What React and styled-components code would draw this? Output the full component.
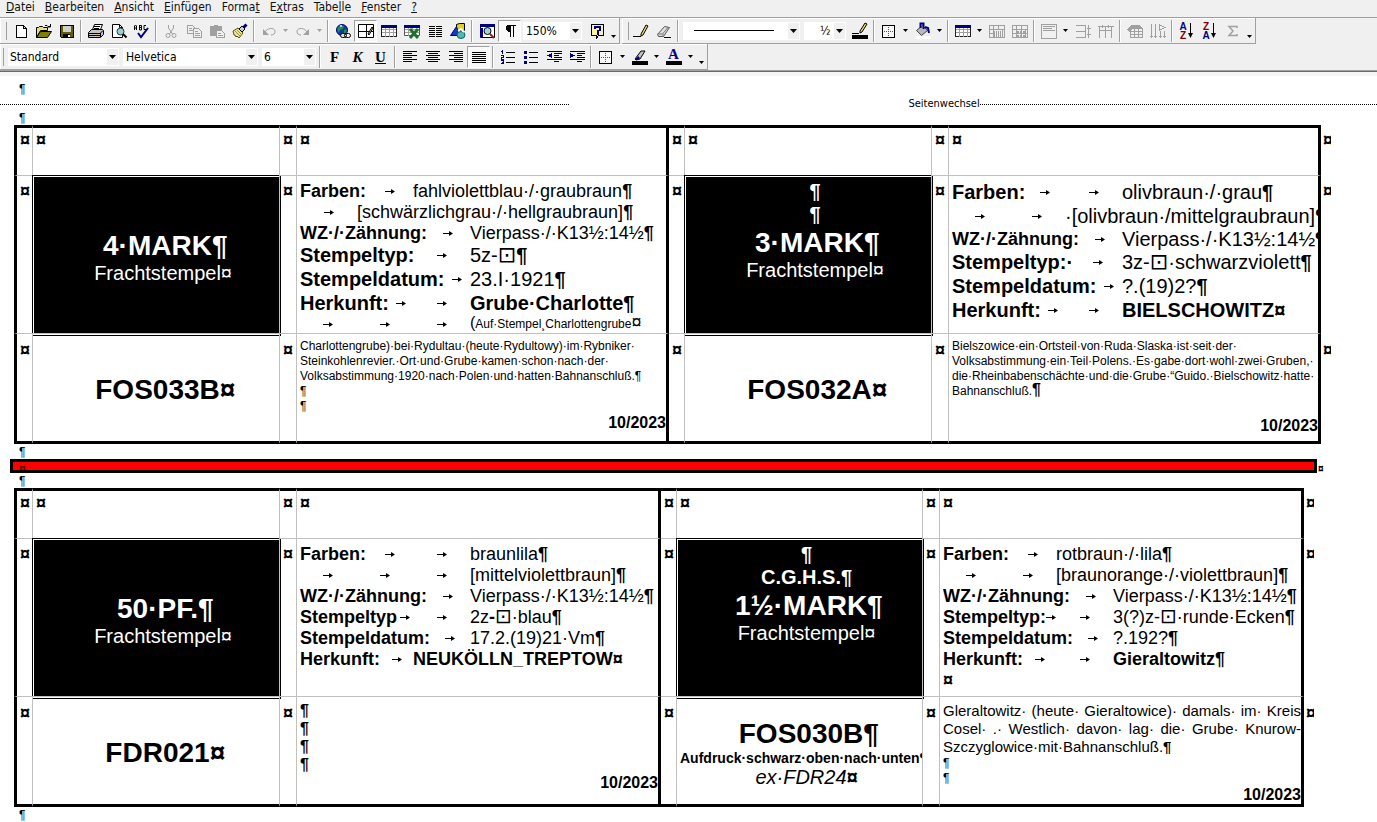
import React from "react";
import styled, { createGlobalStyle, css } from "styled-components";

const GlobalStyle = createGlobalStyle`
  *, *::before, *::after { box-sizing: border-box; }
  body {
    margin: 0;
    background: #fff;
    color: #000;
    font-family: "Liberation Sans", Arial, sans-serif;
    overflow-x: hidden;
  }
`;

const uiFont = '"DejaVu Sans Condensed", "Noto Sans", sans-serif';

/* ---------- window chrome ---------- */

const Chrome = styled.header`
  background: #f0f0f0;
  font: 12px/17px ${uiFont};
`;

const MenuBar = styled.nav`
  display: flex;
  gap: 10px;
  height: 17px;
  padding: 0 6px;
  align-items: flex-start;
`;

const MenuItem = styled.button`
  border: 0;
  padding: 0;
  background: none;
  font: 12px/14px ${uiFont};
  color: #111;
  white-space: nowrap;
`;

const ToolRow = styled.div`
  display: flex;
  height: ${(p) => (p.$last ? 26 : 27)}px;
  gap: 2px;
  border-top: ${(p) => (p.$last ? 0 : "1px solid #a0a0a0")};
`;

const Toolbar = styled.div`
  display: flex;
  align-items: center;
  padding: 0 0 0 ${(p) => p.$lead || 9}px;
  border-right: 1px solid #a0a0a0;
  border-bottom: 1px solid #a0a0a0;
  box-shadow: inset 1px 1px 0 #fff;
  background: linear-gradient(#a0a0a0, #a0a0a0) ${(p) => (p.$lead === 8 ? 3 : 6)}px 4px / 1px 18px no-repeat;
`;

const Tool = styled.button`
  width: 23px;
  height: 22px;
  flex: none;
  display: flex;
  align-items: center;
  justify-content: center;
  border: 1px solid transparent;
  padding: 0;
  background: none;
  color: ${(p) => (p.$off ? "#a0a0a0" : "#000")};
  ${(p) =>
    p.$pressed &&
    css`
      border-color: #a0a0a0 #fff #fff #a0a0a0;
      background: #f8f8f8;
    `}
`;

const DropButton = styled(Tool)`
  width: 11px;
  align-items: ${(p) => (p.$low ? "flex-end" : "center")};
  padding-bottom: ${(p) => (p.$low ? 3 : 0)}px;
`;

const Separator = styled.span`
  width: 6px;
  height: 22px;
  flex: none;
  background: linear-gradient(90deg, transparent 2px, #a0a0a0 2px, #a0a0a0 3px, #fff 3px, #fff 4px, transparent 4px);
`;

const Combo = styled.label`
  position: relative;
  display: block;
  flex: none;
  width: ${(p) => p.$w}px;
  height: 18px;
  margin-left: ${(p) => p.$before || 0}px;
  margin-right: ${(p) => p.$after ?? 4}px;
  background: #fff;
`;

const ComboSelect = styled.select`
  appearance: none;
  width: 100%;
  height: 18px;
  border: 0;
  padding: 0 12px 0 ${(p) => p.$indent || 2}px;
  background: #fff;
  color: #000;
  font: 12px/16px ${uiFont};
`;

const ComboArrow = styled.span`
  position: absolute;
  right: 1px;
  top: 1px;
  width: 11px;
  height: 16px;
  display: flex;
  align-items: center;
  justify-content: center;
  background: #f0f0f0;
  pointer-events: none;
`;

const LineSample = styled.span`
  position: absolute;
  left: 11px;
  top: 8px;
  width: 80px;
  height: 1px;
  background: #000;
  pointer-events: none;
`;

const ChromeEdge = styled.div`
  height: 6px;
  border-top: 1px solid #a0a0a0;
  background: linear-gradient(#696969 1px, #f5f5f5 1px);
`;

function Triangle({ size = 5 }) {
  const h = (size + 1) / 2;
  return (
    <svg width={size} height={h} viewBox={`0 0 ${size} ${h}`} aria-hidden="true">
      <path d={`M0 0H${size}L${size / 2} ${h}Z`} fill="#000" />
    </svg>
  );
}

function Picker({ label, value, width, before, after, indent, children }) {
  return (
    <Combo $w={width} $before={before} $after={after}>
      <ComboSelect aria-label={label} $indent={indent} defaultValue={value}>
        <option value={value}>{value}</option>
      </ComboSelect>
      {children}
      <ComboArrow>
        <Triangle size={7} />
      </ComboArrow>
    </Combo>
  );
}

const Glyph = styled.svg.attrs({ width: 18, height: 18, viewBox: "0 0 18 18", fill: "none", "aria-hidden": true })`
  display: block;
  flex: none;
  shape-rendering: ${(p) => (p.$smooth ? "auto" : "crispEdges")};
`;

const NAVY = "#000080";

const icons = {
  new: <path d="M4.5 3.5h7l3 3v9h-10zM11.5 3.5v3h3" fill="#fff" stroke="#000" />,
  open: (
    <>
      <path d="M1.5 15.5v-10h2l1-1h3l1 1h4v3h-7z" fill="#e8e070" stroke="#000" />
      <path d="M1.5 15.5l4-6h11l-4 6z" fill="#808000" stroke="#000" />
      <path d="M10 3.500h2l1 1h2M15.500 2v3h-3" stroke="#000" />
    </>
  ),
  save: (
    <>
      <path d="M2.500 3.500h13v12h-12l-1-1z" fill="#606000" stroke="#000" />
      <path d="M5 4h8v6H5z" fill="#d0d0c8" />
      <path d="M5 12h7v4H5z" fill="#000" />
      <path d="M10 13h2v2h-2z" fill="#fff" />
    </>
  ),
  print: (
    <>
      <path d="M5.500 7.500l2-5h8l-2 5z" fill="#fff" stroke="#000" />
      <path d="M7 4.500h6M7 6.500h5" stroke="#000" />
      <path d="M1.500 10.500l3-3h11l1 1v4l-3 3h-12z" fill="#c0c0c0" stroke="#000" />
      <path d="M2 11.500h11l3-3M2 13.500h11M13.500 11v4" stroke="#000" />
      <path d="M8 12h3v1H8z" fill="#e0d000" />
    </>
  ),
  preview: (
    <>
      <path d="M2.500 2.500h7l3 3v10h-10z" fill="#fff" stroke="#000" />
      <path d="M9.500 2.500v3h3" stroke="#000" />
      <circle cx="10.500" cy="9.500" r="3.500" fill="#9cd0d0" stroke="#333" />
      <path d="M13 12l3.500 3.500" stroke="#000" strokeWidth="2" />
    </>
  ),
  spell: (
    <>
      <path d="M1.500 8V4l1-1 1 1v4M2 6h2M6.500 3v5h2v-2.500h-2h2V3.500h-2M13 3.500h-2v4h2" stroke="#000" />
      <path d="M5 11l3 4 7-9" stroke={NAVY} strokeWidth="2" />
    </>
  ),
  cut: (
    <>
      <path d="M6.500 3v3l4 6M11.500 3v3l-4 6" stroke="currentColor" />
      <circle cx="6" cy="13.500" r="2" stroke="currentColor" />
      <circle cx="12" cy="13.500" r="2" stroke="currentColor" />
    </>
  ),
  copy: (
    <>
      <path d="M2.500 3.500h5l2 2v6h-7zM4 6.500h3M4 8.500h4" stroke="currentColor" />
      <path d="M8.500 6.500h5l3 3v6h-8z" fill="#f0f0f0" stroke="currentColor" />
      <path d="M10 9.500h3M10 11.500h5M10 13.500h5" stroke="currentColor" />
    </>
  ),
  paste: (
    <>
      <path d="M2 4h4V2.500h4V4h4v4H8v6H2z" fill="currentColor" />
      <path d="M8.500 8.500h5l3 3v4h-8z" fill="#f0f0f0" stroke="currentColor" />
      <path d="M10 11.500h3M10 13.500h5" stroke="currentColor" />
    </>
  ),
  brush: (
    <>
      <path d="M2 9l5-3 5 5-4 5-2-2-1 1-1-2-1 0z" fill="#f0e888" stroke="#555500" />
      <path d="M4 9l5 5M6 8l5 5" stroke="#888" />
      <path d="M8 7l3-3 3 3-3 3z" fill="#ccc" stroke="#000" />
      <path d="M12.500 5.500l3-3" stroke={NAVY} strokeWidth="3" />
    </>
  ),
  undo: (
    <>
      <path d="M5 10c2-4 9-5 10-1 .5 3-2 4-4 4" stroke="currentColor" />
      <path d="M3 7v6h6z" fill="currentColor" />
    </>
  ),
  redo: (
    <>
      <path d="M13 10c-2-4-9-5-10-1-.5 3 2 4 4 4" stroke="currentColor" />
      <path d="M15 7v6H9z" fill="currentColor" />
    </>
  ),
  globe: (
    <>
      <circle cx="8" cy="8" r="5.500" fill="#1038a0" stroke={NAVY} />
      <path d="M4 5l3-2 3 1-1 3-3 1-1 3-2-3zM10 8l3-1-1 4-2 0z" fill="#209040" />
      <path d="M6 3h2v2H6z" fill="#9fd8ff" />
      <rect x="6.500" y="11.500" width="6" height="4" rx="2" fill="#ddd" stroke="#000" />
      <rect x="10.500" y="11.500" width="6" height="4" rx="2" stroke="#000" />
    </>
  ),
  borders: (
    <>
      <path d="M1.500 2.500h15v13h-15zM9.500 2.500v13M1.500 9.500h15" fill="#fff" stroke="#000" />
      <path d="M11 12l4-7 1 1-4 7z" fill="#f0e040" stroke="#000" />
    </>
  ),
  table: (
    <>
      <path d="M1.500 3.500h15v11h-15z" fill="#fff" stroke="#222" />
      <path d="M2 7.500h14M2 10.500h14M5.500 6v9M9.500 6v9M13.500 6v9" stroke="#a0a0a0" />
      <path d="M1 3h16v3H1z" fill={NAVY} />
    </>
  ),
  excel: (
    <>
      <path d="M1.500 3.500h15v10h-15z" fill="#fff" stroke="#555" />
      <path d="M2 7.500h14M2 10.500h14M5.500 6v8M9.500 6v8" stroke="#a0a0a0" />
      <path d="M1 3h16v3H1z" fill={NAVY} />
      <path d="M7 7l8 9M15 7l-8 9" stroke="#207030" strokeWidth="3" />
    </>
  ),
  columns: <path d="M3 4.500h6M3 6.500h6M3 8.500h6M3 10.500h6M3 12.500h6M3 14.500h6M10 4.500h6M10 6.500h6M10 8.500h6M10 10.500h6M10 12.500h6M10 14.500h6" stroke="#000" />,
  draw: (
    <>
      <path d="M7.500 2.500l3-1h5v7h-8z" fill="#e0d020" stroke="#000" />
      <path d="M1.500 13.500l6-9 3 9z" fill="#1838c0" stroke={NAVY} />
      <ellipse cx="12" cy="13" rx="4" ry="3.500" fill="#50b8b0" stroke="#066" />
      <path d="M9 9l3-2 3 3" stroke="#fff" strokeWidth="2" />
    </>
  ),
  map: (
    <>
      <path d="M2.500 2.500h14v13h-14z" fill="#fff" stroke="#000" />
      <path d="M2 2h15v3H2zM2 6h3v9H2z" fill={NAVY} />
      <circle cx="9.500" cy="9" r="3.500" fill="#9cd8d8" stroke="#000" />
      <path d="M12 12l4 4" stroke="#902020" strokeWidth="2" />
    </>
  ),
  pilcrow: (
    <>
      <path d="M6 3h9v1H6zM6 3h4v7H7L5 8V4z" fill="#000" />
      <path d="M9.500 3v12M12.500 3v12" stroke="#000" />
    </>
  ),
  help: (
    <>
      <path d="M3.500 2.500h12v11h-5l-2 3v-3h-5z" fill="#f8f4a0" stroke="#000" />
      <path d="M7 6.500V5h5v3l-2.500 1v1.500M9.500 11v2" stroke={NAVY} strokeWidth="2" />
    </>
  ),
  pencil: (
    <>
      <path d="M1 14.500h8" stroke="#000" />
      <path d="M9 12l5-9 2 1-5 9-2 1z" fill="#e8d860" stroke="#000" />
    </>
  ),
  eraser: (
    <>
      <path d="M2.500 12.500l7-8 5 1-6 9h-5z" fill="#ddd" stroke="#555" />
      <path d="M2.500 12l5 0 6-7M8 12v3" stroke="#777" />
      <path d="M9 15.500h7" stroke="#000" />
    </>
  ),
  pencolor: (
    <>
      <path d="M1 11.500h7" stroke="#000" />
      <path d="M9 9l5-8 2 1-5 8-2 1z" fill="#e8d860" stroke="#000" />
      <path d="M1 13h16v4H1z" fill="#000" />
    </>
  ),
  grid: (
    <>
      <path d="M2.500 3.500h12v12h-12z" fill="#f8f8f8" stroke="#000" />
      <path d="M8.500 5v9M4 9.500h9" stroke="#555" strokeDasharray="1 1" />
    </>
  ),
  bucket: (
    <>
      <path d="M2.500 8.500l6-5 5 5-6 5z" fill="#b8b8b8" stroke="#444" />
      <path d="M6.500 6V1.500h3V7M11 5l3 1 1 5" stroke={NAVY} strokeWidth="2" />
      <path d="M1 14h16v3H1z" fill="#fff" />
    </>
  ),
  merge: (
    <>
      <path d="M1.500 3.500h15v12h-15zM1.500 7.500h15M5.500 3v12M10.500 3v4M14.500 7v8M1.500 11.500h4" stroke="currentColor" />
      <path d="M6 9.500h8M6 11.500h8M6 13.500h8" stroke="currentColor" strokeDasharray="1 1" strokeWidth="2" />
    </>
  ),
  split: (
    <>
      <path d="M1.500 3.500h15v12h-15zM1.500 7.500h15M5.500 3v12M10.500 3v12M14.500 7v8M1.500 11.500h15" stroke="currentColor" />
      <path d="M6 9.500h8M6 13.500h8" stroke="currentColor" strokeDasharray="2 1" strokeWidth="2" />
    </>
  ),
  alignBox: <path d="M1.500 2.500h15v14h-15zM3 4.500h12M3 6.500h9M3 8.500h12" stroke="currentColor" />,
  rows: <path d="M2 3.500h10M2 9.500h10M2 15.500h10M11.500 3v13M14.500 3v13M13 6h4M13 12h4" stroke="currentColor" />,
  cols: <path d="M2.500 5v11M8.500 5v11M14.500 5v11M2 8.500h13M1 4.500h16M5 3v3M11 3v3" stroke="currentColor" />,
  autoformat: (
    <>
      <path d="M4.500 6.500h12v9h-12zM4.500 9.500h12M4.500 12.500h12M8.500 6v9M12.500 6v9" stroke="currentColor" />
      <path d="M1 7l4-4h9l2 3H7l-4 4z" fill="currentColor" />
    </>
  ),
  textdir: (
    <path d="M2.500 2v14M6.500 2v14M11.500 9v7M15.500 9v7M10 2.500l6 3-6 3zM1 14.500h3M5 14.500h3M10 14.500h3M14 14.500h3" stroke="currentColor" />
  ),
  sigma: <path d="M13 6V4.500H5l4 4.500-4 4.500h8V12" stroke="currentColor" strokeWidth="1.500" />,
  left: <path d="M2 3.500h14M2 5.500h9M2 7.500h14M2 9.500h9M2 11.500h14M2 13.500h9" stroke="#000" />,
  center: <path d="M2 3.500h14M4 5.500h10M2 7.500h14M4 9.500h10M2 11.500h14M4 13.500h10" stroke="#000" />,
  right: <path d="M2 3.500h14M7 5.500h9M2 7.500h14M7 9.500h9M2 11.500h14M7 13.500h9" stroke="#000" />,
  justify: <path d="M2 4.500h14M2 6.500h14M2 8.500h14M2 10.500h14M2 12.500h14M2 14.500h14" stroke="#000" />,
  numbers: (
    <>
      <path d="M7 4.500h9M7 9.500h9M7 14.500h9" stroke="#000" />
      <path d="M3.500 2v4M2 3.500h2M2 7.500h2v2H2.500v1.500H5M2 12.500h2.500v3H2M3 14h1" stroke={NAVY} />
    </>
  ),
  bullets: (
    <>
      <path d="M7 4.500h9M7 9.500h9M7 14.500h9" stroke="#000" />
      <path d="M2 3h3v3H2zM2 8h3v3H2zM2 13h3v3H2z" fill={NAVY} />
    </>
  ),
  outdent: (
    <>
      <path d="M2 3.500h15M9 5.500h8M9 7.500h5M9 9.500h8M2 11.500h15M9 13.500h5" stroke="#000" />
      <path d="M7 5v5L2 7.500z" fill={NAVY} />
    </>
  ),
  indent: (
    <>
      <path d="M2 3.500h15M9 5.500h8M9 7.500h5M9 9.500h8M2 11.500h15M9 13.500h5" stroke="#000" />
      <path d="M2 5v5l5-2.500z" fill={NAVY} />
    </>
  ),
  highlight: (
    <>
      <path d="M4 11l6-8h4l-5 8-4 1z" fill="#c0c0c0" stroke="#000" />
      <path d="M4 12l3-4 2 2-2 2z" fill={NAVY} />
      <path d="M1 13h16v4H1z" fill="#000" />
    </>
  ),
};

const smoothIcons = new Set(["open", "print", "preview", "spell", "cut", "brush", "undo", "redo", "globe", "draw", "map", "pencil", "eraser", "pencolor", "bucket", "highlight", "sigma", "excel", "borders"]);

function IconTool({ icon, label, off, pressed }) {
  return (
    <Tool type="button" aria-label={label} $off={off} $pressed={pressed}>
      <Glyph $smooth={smoothIcons.has(icon)}>{icons[icon]}</Glyph>
    </Tool>
  );
}

function Drop({ label, low, off }) {
  return (
    <DropButton type="button" aria-label={label} $low={low}>
      <svg width="5" height="3" viewBox="0 0 5 3" aria-hidden="true">
        <path d="M0 0H5L2.500 3Z" fill={off ? "#a0a0a0" : "#000"} />
      </svg>
    </DropButton>
  );
}

const Letter = styled.span`
  font: bold 15px/18px "Liberation Serif", serif;
  font-style: ${(p) => (p.$italic ? "italic" : "normal")};
  text-decoration: ${(p) => (p.$under ? "underline" : "none")};
`;

const FontColor = styled.span`
  width: 16px;
  border-bottom: 4px solid #000;
  color: ${NAVY};
  font: bold 15px/13px "Liberation Serif", serif;
  text-align: center;
`;

const SortIcon = styled.span`
  display: flex;
  align-items: center;
`;

const SortLetters = styled.span`
  display: flex;
  flex-direction: column;
  font: bold 10px/9px "Liberation Sans", sans-serif;
`;

const Tint = styled.span`
  color: ${(p) => p.$c};
`;

function Sort({ label, top, bottom, flip }) {
  return (
    <Tool type="button" aria-label={label}>
      <SortIcon>
        <SortLetters>
          <Tint $c={flip ? "#800000" : NAVY}>{top}</Tint>
          <Tint $c={flip ? NAVY : "#800000"}>{bottom}</Tint>
        </SortLetters>
        <svg width="7" height="16" viewBox="0 0 7 16" aria-hidden="true">
          <path d="M3.500 0v12" stroke="#000" />
          <path d="M1 10h5l-2.500 5z" fill="#000" />
        </svg>
      </SortIcon>
    </Tool>
  );
}

const menus = [
  ["", "D", "atei"],
  ["", "B", "earbeiten"],
  ["", "A", "nsicht"],
  ["", "E", "infügen"],
  ["Forma", "t", ""],
  ["E", "x", "tras"],
  ["Tabe", "l", "le"],
  ["", "F", "enster"],
  ["", "?", ""],
];

function WindowChrome() {
  return (
    <Chrome>
      <MenuBar>
        {menus.map(([a, key, b]) => (
          <MenuItem type="button" key={a + key + b}>
            {a}
            <u>{key}</u>
            {b}
          </MenuItem>
        ))}
      </MenuBar>
      <ToolRow>
        <Toolbar role="toolbar" aria-label="Standard">
          <IconTool icon="new" label="Neu" />
          <IconTool icon="open" label="Öffnen" />
          <IconTool icon="save" label="Speichern" />
          <Separator />
          <IconTool icon="print" label="Drucken" />
          <IconTool icon="preview" label="Seitenansicht" />
          <IconTool icon="spell" label="Rechtschreibung" />
          <Separator />
          <IconTool icon="cut" label="Ausschneiden" off />
          <IconTool icon="copy" label="Kopieren" off />
          <IconTool icon="paste" label="Einfügen" off />
          <IconTool icon="brush" label="Format übertragen" />
          <Separator />
          <IconTool icon="undo" label="Rückgängig" off />
          <Drop label="Rückgängig-Liste" off />
          <IconTool icon="redo" label="Wiederherstellen" off />
          <Drop label="Wiederherstellen-Liste" off />
          <Separator />
          <IconTool icon="globe" label="Hyperlink" />
          <IconTool icon="borders" label="Tabellen und Rahmen" pressed />
          <IconTool icon="table" label="Tabelle einfügen" />
          <IconTool icon="excel" label="Excel-Tabelle einfügen" />
          <IconTool icon="columns" label="Spalten" />
          <IconTool icon="draw" label="Zeichnen" />
          <Separator />
          <IconTool icon="map" label="Dokumentstruktur" />
          <IconTool icon="pilcrow" label="Formatierungszeichen" pressed />
          <Picker label="Zoom" value="150%" width={59} before={2} after={3} indent={3} />
          <IconTool icon="help" label="Hilfe" />
          <Drop label="Weitere Schaltflächen" low />
        </Toolbar>
        <Toolbar role="toolbar" aria-label="Tabellen und Rahmen" $lead={7}>
          <IconTool icon="pencil" label="Tabelle zeichnen" />
          <IconTool icon="eraser" label="Radierer" />
          <Separator />
          <Picker label="Linienart" value="" width={117} before={2} after={4}>
            <LineSample />
          </Picker>
          <Picker label="Linienstärke" value="½" width={42} indent={16} after={2} />
          <IconTool icon="pencolor" label="Rahmenfarbe" />
          <Separator />
          <IconTool icon="grid" label="Rahmenlinien" />
          <Drop label="Rahmenlinien wählen" />
          <IconTool icon="bucket" label="Schattierung" />
          <Drop label="Schattierungsfarbe" />
          <Separator />
          <IconTool icon="table" label="Tabelle" />
          <Drop label="Tabellenbefehle" />
          <IconTool icon="merge" label="Zellen verbinden" off />
          <IconTool icon="split" label="Zellen teilen" off />
          <Separator />
          <IconTool icon="alignBox" label="Ausrichtung" off />
          <Drop label="Ausrichtung wählen" />
          <IconTool icon="rows" label="Zeilen gleichmäßig verteilen" off />
          <IconTool icon="cols" label="Spalten gleichmäßig verteilen" off />
          <Separator />
          <IconTool icon="autoformat" label="AutoFormat" off />
          <IconTool icon="textdir" label="Textrichtung" off />
          <Separator />
          <Sort label="Aufsteigend sortieren" top="A" bottom="Z" />
          <Sort label="Absteigend sortieren" top="Z" bottom="A" flip />
          <IconTool icon="sigma" label="AutoSumme" off />
          <Drop label="Weitere Tabellenbefehle" low />
        </Toolbar>
      </ToolRow>
      <ToolRow $last>
        <Toolbar role="toolbar" aria-label="Format" $lead={8}>
          <Picker label="Formatvorlage" value="Standard" width={111} />
          <Picker label="Schriftart" value="Helvetica" width={135} indent={3} />
          <Picker label="Schriftgrad" value="6" width={54} after={1} />
          <Separator />
          <Tool type="button" aria-label="Fett"><Letter>F</Letter></Tool>
          <Tool type="button" aria-label="Kursiv"><Letter $italic>K</Letter></Tool>
          <Tool type="button" aria-label="Unterstrichen"><Letter $under>U</Letter></Tool>
          <Separator />
          <IconTool icon="left" label="Linksbündig" />
          <IconTool icon="center" label="Zentriert" />
          <IconTool icon="right" label="Rechtsbündig" />
          <IconTool icon="justify" label="Blocksatz" pressed />
          <Separator />
          <IconTool icon="numbers" label="Nummerierung" />
          <IconTool icon="bullets" label="Aufzählungszeichen" />
          <IconTool icon="outdent" label="Einzug verkleinern" />
          <IconTool icon="indent" label="Einzug vergrößern" />
          <Separator />
          <IconTool icon="grid" label="Rahmen" />
          <Drop label="Rahmen wählen" />
          <IconTool icon="highlight" label="Hervorheben" />
          <Drop label="Hervorhebungsfarbe" />
          <Tool type="button" aria-label="Schriftfarbe"><FontColor>A</FontColor></Tool>
          <Drop label="Schriftfarbe wählen" />
          <Drop label="Weitere Formatbefehle" low />
        </Toolbar>
      </ToolRow>
      <ChromeEdge />
    </Chrome>
  );
}

/* ---------- document ---------- */

const Page = styled.main`
  padding-top: 5px;
`;

const Para = styled.p`
  margin: 0;
  height: 15px;
  padding: 1px 0 0 19px;
  font-size: 12px;
  line-height: 15px;
`;

const PageBreak = styled.div`
  display: flex;
  align-items: center;
  height: 14px;
  padding-top: 2px;
  font: 11px/12px ${uiFont};
`;

const Dots = styled.span`
  flex: ${(p) => p.$grow} 1 0;
  height: 1px;
  margin-top: 1px;
  background: repeating-linear-gradient(90deg, #000 0 1px, transparent 1px 2px);
`;

const BreakGap = styled.span`
  flex: 340 1 0;
`;

const BarRow = styled.div`
  display: flex;
  align-items: flex-end;
  margin: 0 52px 0 10px;
  height: 14px;
`;

const RedBar = styled.div`
  flex: 1;
  height: 14px;
  border: 3px solid #000;
  background: #f00;
  color: #600000;
  overflow: hidden;
  padding-left: 6px;
  font: bold 12px/15px "Liberation Sans", Arial, sans-serif;
`;

const BarEnd = styled.span`
  width: 8px;
  height: 8px;
  padding-left: 1px;
  overflow: hidden;
  font: bold 10px/8px "Liberation Sans", Arial, sans-serif;
`;

const Sheet = styled.table`
  width: calc(100% - ${(p) => p.$margin}px);
  margin-left: 14px;
  table-layout: fixed;
  border-collapse: separate;
  border-spacing: 0;
`;

const Col = styled.col`
  width: ${(p) => (p.$w ? `${p.$w}px` : "auto")};
`;

const Row = styled.tr`
  height: ${(p) => p.$h}px;
`;

const Cell = styled.td`
  position: relative;
  padding: ${(p) => p.$top}px 0 0 3px;
  vertical-align: ${(p) => (p.$middle ? "middle" : "top")};
  text-align: ${(p) => (p.$center ? "center" : "left")};
  white-space: nowrap;
  border: 0 solid #c0c0c0;
  border-left-width: 1px;
  border-top-width: 1px;
  ${(p) => p.$edge === "start" && "border-left: 3px solid #000;"}
  ${(p) => p.$edge === "none" && "border-left: 0;"}
  ${(p) => p.$edge === "end" && "border-right: 3px solid #000;"}
  ${(p) => p.$row === "first" && "border-top: 3px solid #000;"}
  ${(p) => p.$row === "last" && "border-bottom: 3px solid #000;"}
`;

const OutsideCell = styled.td`
  padding: ${(p) => p.$top}px 0 0 2px;
  vertical-align: top;
`;

const StampCell = styled(Cell)`
  color: #fff;
  &::before {
    content: "";
    position: absolute;
    inset: -1px -2px -3px -1px;
    border: 1px solid #000;
    background: #000;
    box-shadow: inset 0 0 0 1px #fff;
  }
`;

const StampText = styled.div`
  position: relative;
`;

const Mark = styled.span`
  display: block;
  width: ${(p) => (p.$cut ? "8px" : "auto")};
  overflow: hidden;
  font-size: 18px;
  font-weight: bold;
  line-height: 21px;
`;

const Line = styled.div`
  display: flex;
  font-size: ${(p) => p.$size || 18}px;
  font-weight: ${(p) => (p.$bold ? "bold" : "normal")};
  font-style: ${(p) => (p.$italic ? "italic" : "normal")};
  line-height: ${(p) => p.$lh || 21}px;
  justify-content: ${(p) => p.$align || "flex-start"};
`;

const Justified = styled.div`
  font-size: 15px;
  line-height: 18px;
  white-space: normal;
  text-align: justify;
  text-align-last: justify;
`;

const Clip = styled.div`
  overflow: hidden;
`;

const Hang = styled.span`
  width: 0;
  overflow: visible;
  font-weight: ${(p) => (p.$bold ? "bold" : "inherit")};
`;

const leadWidth = { 1: 57, 2: 113, 3: 170 };

const Lead = styled.span`
  display: grid;
  flex: none;
  width: ${(p) => leadWidth[p.$stops]}px;
  grid-template-columns: repeat(${(p) => p.$stops}, 1fr);
`;

const Stop = styled.span`
  grid-column: span ${(p) => p.$span};
  display: flex;
  min-width: 0;
  align-items: center;
`;

const Label = styled.b`
  flex: none;
  font-size: ${(p) => (p.$size ? `${p.$size}px` : "inherit")};
`;

const TabArrow = styled.span`
  flex: 1;
  display: flex;
  justify-content: center;
`;

const Sym = styled.span`
  font-size: ${(p) => p.$size}px;
  font-weight: ${(p) => (p.$bold ? "bold" : "normal")};
  line-height: 0;
  font-family: ${(p) => (p.$math ? '"DejaVu Sans", sans-serif' : "inherit")};
`;

function Tab() {
  return (
    <TabArrow>
      <svg width="10" height="5" viewBox="0 0 10 5" aria-hidden="true">
        <path d="M0 2.500h8" stroke="#000" />
        <path d="M6 0l4 2.500-4 2.500z" fill="#000" />
      </svg>
    </TabArrow>
  );
}

/* spans lists how many tab stops each tab covers; the first one also holds the label */
function Field({ label, labelSize, spans, size, lh, bold, end = "¶", children }) {
  const total = spans.reduce((a, b) => a + b, 0);
  return (
    <Line $size={size} $lh={lh}>
      <Lead $stops={total}>
        {spans.map((s, i) => (
          <Stop $span={s} key={i}>
            {i === 0 && label ? <Label $size={labelSize}>{label}</Label> : null}
            <Tab />
          </Stop>
        ))}
      </Lead>
      <span>
        {bold ? <b>{children}</b> : children}
        <b>{end}</b>
      </span>
    </Line>
  );
}

function Box({ size }) {
  return <Sym $math $size={size}>⊡</Sym>;
}

function Note({ children }) {
  return <Line $size={12} $lh={15}>{children}</Line>;
}

function Stamp({ value, extra }) {
  return (
    <StampText>
      {extra}
      <Line $size={28} $lh={33} $bold $align="center">{value}<Hang>¶</Hang></Line>
      <Line $size={20} $lh={23} $align="center">Frachtstempel<Hang>¤</Hang></Line>
    </StampText>
  );
}

const Blank20 = () => (
  <Line $size={20} $lh={23} $bold $align="center"><Hang>¶</Hang></Line>
);

function Code({ children, end = "¤" }) {
  return <Line $size={28} $lh={33} $bold $align="center">{children}<Hang>{end}</Hang></Line>;
}

function DateLine() {
  return <Line $size={16} $lh={18} $bold $align="flex-end">10/2023</Line>;
}

function LabelSheet({ margin, stampWidth, left, right }) {
  const halves = [left, right];
  return (
    <Sheet $margin={margin}>
      <colgroup>
        <Col $w={18} /><Col $w={247} /><Col $w={17} /><Col />
        <Col $w={15} /><Col $w={stampWidth} /><Col $w={17} /><Col />
        <Col $w={14} />
      </colgroup>
      <tbody>
        <Row $h={50}>
          {halves.map((_, i) => (
            <React.Fragment key={i}>
              <Cell $row="first" $edge={i ? "none" : "start"} $top={2}><Mark>¤</Mark></Cell>
              <Cell $row="first" $top={2}><Mark>¤</Mark></Cell>
              <Cell $row="first" $top={2}><Mark>¤</Mark></Cell>
              <Cell $row="first" $edge="end" $top={2}><Mark>¤</Mark></Cell>
            </React.Fragment>
          ))}
          <OutsideCell $top={5}><Mark $cut>¤</Mark></OutsideCell>
        </Row>
        <Row $h={158}>
          {halves.map((h, i) => (
            <React.Fragment key={i}>
              <Cell $edge={i ? "none" : "start"} $top={5}><Mark>¤</Mark></Cell>
              <StampCell $center $top={4} $middle={h.middle}>{h.stamp}</StampCell>
              <Cell $top={5}><Mark>¤</Mark></Cell>
              <Cell $edge="end" $top={h.fieldTop || 5}><Clip>{h.fields}</Clip></Cell>
            </React.Fragment>
          ))}
          <OutsideCell $top={6}><Mark $cut>¤</Mark></OutsideCell>
        </Row>
        <Row $h={111}>
          {halves.map((h, i) => (
            <React.Fragment key={i}>
              <Cell $row="last" $edge={i ? "none" : "start"} $top={6}><Mark>¤</Mark></Cell>
              <Cell $row="last" $center $middle $top={4}><Clip>{h.code}</Clip></Cell>
              <Cell $row="last" $top={6}><Mark>¤</Mark></Cell>
              <Cell $row="last" $edge="end" $top={5}>{h.notes}</Cell>
            </React.Fragment>
          ))}
          <OutsideCell $top={7}><Mark $cut>¤</Mark></OutsideCell>
        </Row>
      </tbody>
    </Sheet>
  );
}

const mark4 = {
  middle: true,
  stamp: <Stamp value="4·MARK" />,
  fields: (
    <>
      <Field label="Farben:" spans={[2]}>fahlviolettblau·/·graubraun</Field>
      <Field spans={[1]}>[schwärzlichgrau·/·hellgraubraun]</Field>
      <Field label="WZ·/·Zähnung:" spans={[3]}>Vierpass·/·K13½:14½</Field>
      <Field label="Stempeltyp:" spans={[3]} size={20} lh={23}>5z-<Box size={22} /></Field>
      <Field label="Stempeldatum:" spans={[3]} size={20} lh={24}>23.I·1921</Field>
      <Field label="Herkunft:" spans={[2, 1]} size={20} lh={24} bold>Grube·Charlotte</Field>
      <Field spans={[1, 1, 1]} size={12} lh={18} end={<Sym $size={18}>¤</Sym>}>
        <Sym $size={16}>(</Sym>Auf·Stempel¸Charlottengrube
      </Field>
    </>
  ),
  code: <Code>FOS033B</Code>,
  notes: (
    <>
      <Note>Charlottengrube)·bei·Rydultau·(heute·Rydultowy)·im·Rybniker·</Note>
      <Note>Steinkohlenrevier.·Ort·und·Grube·kamen·schon·nach·der·</Note>
      <Note>Volksabstimmung·1920·nach·Polen·und·hatten·Bahnanschluß.¶</Note>
      <Note>¶</Note>
      <Note>¶</Note>
      <DateLine />
    </>
  ),
};

const mark3 = {
  stamp: <Stamp value="3·MARK" extra={<><Blank20 /><Blank20 /></>} />,
  fieldTop: 4,
  fields: (
    <>
      <Field label="Farben:" spans={[2, 1]} size={20} lh={24}>olivbraun·/·grau</Field>
      <Field spans={[1, 1]} size={20} lh={24}>·[olivbraun·/mittelgraubraun]</Field>
      <Field label="WZ·/·Zähnung:" labelSize={18} spans={[3]} size={20} lh={22}>Vierpass·/·K13½:14½</Field>
      <Field label="Stempeltyp:·" spans={[3]} size={20} lh={24}>3z-<Box size={22} />·schwarzviolett</Field>
      <Field label="Stempeldatum:" spans={[3]} size={20} lh={24}>?.(19)2?</Field>
      <Field label="Herkunft:" spans={[2, 1]} size={20} lh={24} bold end="¤">BIELSCHOWITZ</Field>
    </>
  ),
  code: <Code>FOS032A</Code>,
  notes: (
    <>
      <Note>Bielszowice·ein·Ortsteil·von·Ruda·Slaska·ist·seit·der·</Note>
      <Note>Volksabstimmung·ein·Teil·Polens.·Es·gabe·dort·wohl·zwei·Gruben,·</Note>
      <Note>die·Rheinbabenschächte·und·die·Grube·“Guido.·Bielschowitz·hatte·</Note>
      <Note><span>Bahnanschluß.<Sym $size={16} $bold>¶</Sym></span></Note>
      <Line $size={16} $lh={18}>&nbsp;</Line>
      <DateLine />
    </>
  ),
};

const pf50 = {
  middle: true,
  stamp: <Stamp value="50·PF." />,
  fields: (
    <>
      <Field label="Farben:" spans={[2, 1]}>braunlila</Field>
      <Field spans={[1, 1, 1]}>[mittelviolettbraun]</Field>
      <Field label="WZ·/·Zähnung:" spans={[3]}>Vierpass·/·K13½:14½</Field>
      <Field label="Stempeltyp" spans={[2, 1]}>2z<b>-</b><Box size={20} />·blau</Field>
      <Field label="Stempeldatum:" spans={[3]}>17.2.(19)21·Vm</Field>
      <Field label="Herkunft:" spans={[2]} bold end="¤">NEUKÖLLN_TREPTOW</Field>
    </>
  ),
  code: <Code>FDR021</Code>,
  notes: (
    <>
      {[0, 1, 2, 3].map((n) => (
        <Line key={n} $size={16} $lh={18} $bold>¶</Line>
      ))}
      <DateLine />
    </>
  ),
};

const mark15 = {
  stamp: (
    <Stamp
      value="1½·MARK"
      extra={
        <>
          <Blank20 />
          <Line $size={20} $lh={23} $bold $align="center">C.G.H.S.<Hang>¶</Hang></Line>
        </>
      }
    />
  ),
  fields: (
    <>
      <Field label="Farben:" spans={[2]}>rotbraun·/·lila</Field>
      <Field spans={[1, 1]}>[braunorange·/·violettbraun]</Field>
      <Field label="WZ·/·Zähnung:" spans={[3]}>Vierpass·/·K13½:14½</Field>
      <Field label="Stempeltyp:" spans={[2, 1]}>3(?)z-<Box size={20} />·runde·Ecken</Field>
      <Field label="Stempeldatum:" spans={[3]}>?.192?</Field>
      <Field label="Herkunft:" spans={[2, 1]} bold>Gieraltowitz</Field>
      <Mark>¤</Mark>
    </>
  ),
  code: (
    <>
      <Code end="¶">FOS030B</Code>
      <Line $size={14} $lh={16} $bold>Aufdruck·schwarz·oben·nach·unten¶</Line>
      <Line $size={20} $lh={23} $italic $align="center">ex·FDR24<Hang $bold>¤</Hang></Line>
    </>
  ),
  notes: (
    <>
      <Justified>Gleraltowitz· (heute· Gieraltowice)· damals· im· Kreis</Justified>
      <Justified>Cosel· .· Westlich· davon· lag· die· Grube· Knurow-</Justified>
      <Line $size={15} $lh={18}>Szczyglowice·mit·Bahnanschluß.<b>¶</b></Line>
      <Note>¶</Note>
      <Note>¶</Note>
      <DateLine />
    </>
  ),
};

export default function App() {
  return (
    <>
      <GlobalStyle />
      <WindowChrome />
      <Page>
        <Para>¶</Para>
        <PageBreak>
          <Dots $grow={570} />
          <BreakGap />
          Seitenwechsel
          <Dots $grow={398} />
        </PageBreak>
        <Para>¶</Para>
        <LabelSheet margin={56} stampWidth={247} left={mark4} right={mark3} />
        <Para>¶</Para>
        <BarRow>
          <RedBar>¤</RedBar>
          <BarEnd>¤</BarEnd>
        </BarRow>
        <Para>¶</Para>
        <LabelSheet margin={73} stampWidth={246} left={pf50} right={mark15} />
        <Para>¶</Para>
      </Page>
    </>
  );
}
